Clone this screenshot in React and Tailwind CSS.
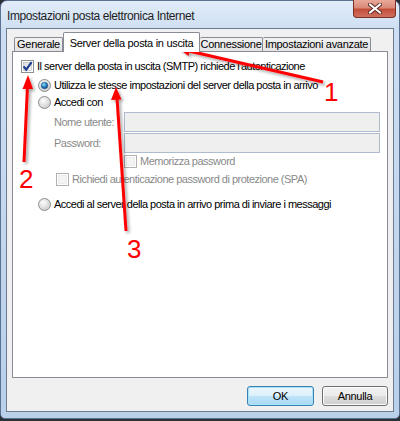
import React from 'react';

const font = "font-['Liberation_Sans',Arial,sans-serif]";

const CheckBox = ({ checked, disabled }) => (
  <svg width="13" height="13" viewBox="0 0 13 13" className="shrink-0">
    <defs>
      <linearGradient id={checked ? 'cbOn' : 'cbOff'} x1="0" y1="0" x2="1" y2="1">
        <stop offset="0" stopColor={disabled ? '#f4f4f4' : '#dcdcdc'} />
        <stop offset="1" stopColor={disabled ? '#f4f4f4' : '#fbfbfb'} />
      </linearGradient>
    </defs>
    <rect x="0.5" y="0.5" width="12" height="12" fill="#fff" stroke={disabled ? '#b1b1b1' : '#8e8f8f'} />
    <rect x="2.5" y="2.5" width="8" height="8" fill={`url(#${checked ? 'cbOn' : 'cbOff'})`} stroke={disabled ? '#e2e2e2' : '#b4b4b4'} strokeWidth="0.6" />
    {checked && <path d="M2.6 6.4 L5.2 9.6 L10.6 2.2" fill="none" stroke="#1d3e8f" strokeWidth="2.2" />}
  </svg>
);

const Radio = ({ checked }) => (
  <svg width="13" height="13" viewBox="0 0 13 13" className="shrink-0">
    <defs>
      <radialGradient id="rbg" cx="0.4" cy="0.35" r="0.7">
        <stop offset="0" stopColor="#fdfdfd" />
        <stop offset="1" stopColor="#c9c9c9" />
      </radialGradient>
      <radialGradient id="rdot" cx="0.4" cy="0.35" r="0.7">
        <stop offset="0" stopColor="#9fe0fb" />
        <stop offset="0.5" stopColor="#2587c4" />
        <stop offset="1" stopColor="#0f3d70" />
      </radialGradient>
    </defs>
    <circle cx="6.5" cy="6.5" r="6" fill="url(#rbg)" stroke="#8e8f8f" />
    {checked && <circle cx="6.5" cy="6.5" r="3.3" fill="url(#rdot)" stroke="#1a4f80" strokeWidth="0.5" />}
  </svg>
);

const Row = ({ className, children }) => (
  <div className={`flex items-center ${className}`}>{children}</div>
);

export default function App() {
  return (
    <div className={`relative w-[400px] h-[421px] overflow-hidden bg-[#2b2f36] text-[11px] tracking-[-0.3px] text-black ${font}`}>
      <div className="flex flex-col w-[400px] h-[419px] rounded-t-[7px] rounded-b-[5px] border border-[#5b7191] bg-[linear-gradient(180deg,#e1ecf8_0%,#cddef2_30px,#b9d0ea_100%)]">
        <div className="h-[27px] shrink-0 flex items-center pl-[6px] pt-[2px] text-[12px] tracking-[-0.4px] text-[#1e1e1e]">
          Impostazioni posta elettronica Internet
        </div>

        <div className="mx-[5px] mb-[6px] flex-1 flex flex-col border border-[#6c7b8f] bg-[#f0f0f0] px-[5px] pt-[4px] pb-[5px]">
          <div className="flex items-end h-[18px] pl-[2px]">
            <div className="h-[14px] w-[49px] flex items-center justify-center border border-b-0 border-[#898c95] rounded-t-[2px] bg-[linear-gradient(#f2f2f2,#e3e3e3)]">
              Generale
            </div>
            <div className="relative z-10 -mb-[1px] h-[20px] w-[137px] flex items-start pt-[2px] justify-center border border-b-0 border-[#898c95] rounded-t-[2px] bg-white">
              Server della posta in uscita
            </div>
            <div className="h-[14px] w-[63px] flex items-center justify-center border border-b-0 border-l-0 border-[#898c95] rounded-t-[2px] bg-[linear-gradient(#f2f2f2,#e3e3e3)]">
              Connessione
            </div>
            <div className="h-[14px] w-[108px] flex items-center justify-center border border-b-0 border-l-0 border-[#898c95] rounded-t-[2px] bg-[linear-gradient(#f2f2f2,#e3e3e3)]">
              Impostazioni avanzate
            </div>
          </div>

          <div className="flex-1 flex flex-col border border-[#898c95] bg-white pr-[7px] tracking-[-0.5px]">
            <Row className="mt-[6px] h-[16px] pl-[8px] gap-[3px]">
              <CheckBox checked />
              <span>Il server della posta in uscita (SMTP) richiede l'autenticazione</span>
            </Row>
            <Row className="mt-[3px] h-[17px] pl-[25px] gap-[3px]">
              <Radio checked />
              <span>Utilizza le stesse impostazioni del server della posta in arrivo</span>
            </Row>
            <Row className="h-[17px] pl-[25px] gap-[3px]">
              <Radio />
              <span>Accedi con</span>
            </Row>
            <Row className="mt-[1px] h-[20px] pl-[41px]">
              <span className="w-[70px] shrink-0 text-[#8a8a8a]">Nome utente:</span>
              <div className="flex-1 h-[20px] border border-[#aebccd] bg-[#efefef]" />
            </Row>
            <Row className="mt-[1px] h-[20px] pl-[41px]">
              <span className="w-[70px] shrink-0 text-[#8a8a8a]">Password:</span>
              <div className="flex-1 h-[20px] border border-[#aebccd] bg-[#efefef]" />
            </Row>
            <Row className="h-[16px] pl-[111px] gap-[3px] text-[#8a8a8a]">
              <CheckBox disabled />
              <span>Memorizza password</span>
            </Row>
            <Row className="mt-[2px] h-[16px] pl-[43px] gap-[3px] text-[#8a8a8a]">
              <CheckBox disabled />
              <span>Richiedi autenticazione password di protezione (SPA)</span>
            </Row>
            <Row className="mt-[9px] h-[16px] pl-[25px] gap-[3px]">
              <Radio />
              <span>Accedi al server della posta in arrivo prima di inviare i messaggi</span>
            </Row>
          </div>

          <div className="mt-[8px] h-[20px] flex justify-end gap-[8px]">
            <button className="w-[67px] h-[20px] rounded-[3px] border border-[#3c7fb1] bg-[linear-gradient(#ecf7fd_0%,#dcf0fb_50%,#bfe3f8_51%,#a9d9f5_100%)] shadow-[inset_0_0_0_1px_#a6e4fb]">
              OK
            </button>
            <button className="w-[66px] h-[20px] rounded-[3px] border border-[#707070] bg-[linear-gradient(#f2f2f2_0%,#ebebeb_50%,#dddddd_51%,#cfcfcf_100%)] shadow-[inset_0_0_0_1px_#fcfcfc]">
              Annulla
            </button>
          </div>
        </div>
      </div>

      <div className="absolute top-0 right-[4px] w-[43px] h-[18px] flex items-center justify-center rounded-b-[4px] border border-t-0 border-[#7a2f24] bg-[linear-gradient(#e9a99a_0%,#d98a79_45%,#c44d3a_55%,#d0705e_100%)]">
        <svg width="14" height="11" viewBox="0 0 14 11">
          <path d="M2 1.5 L12 9.5 M12 1.5 L2 9.5" stroke="#5a2a24" strokeWidth="4" strokeLinecap="square" />
          <path d="M2 1.5 L12 9.5 M12 1.5 L2 9.5" stroke="#ffffff" strokeWidth="2" strokeLinecap="square" />
        </svg>
      </div>

      <svg className="absolute inset-0 pointer-events-none" width="400" height="421" viewBox="0 0 400 421">
        <defs>
          <filter id="sh" x="-20%" y="-20%" width="140%" height="140%">
            <feDropShadow dx="2" dy="2" stdDeviation="1.5" floodColor="#000" floodOpacity="0.35" />
          </filter>
        </defs>
        <g fill="#ff0000" stroke="#ff0000" filter="url(#sh)">
          <line x1="323" y1="82" x2="189" y2="51" strokeWidth="3" />
          <polygon points="178,48 191,45.5 188.5,56" stroke="none" />
          <line x1="24" y1="162" x2="27.5" y2="86" strokeWidth="3" />
          <polygon points="28,75 22.5,89 33,89" stroke="none" />
          <line x1="126" y1="231" x2="117" y2="98" strokeWidth="3" />
          <polygon points="116,87 111,100 121.5,99.5" stroke="none" />
        </g>
        <g fill="#ff0000" fontFamily="'Liberation Sans', Arial, sans-serif" fontSize="26">
          <text x="324" y="101">1</text>
          <text x="19" y="188">2</text>
          <text x="127" y="258">3</text>
        </g>
      </svg>
    </div>
  );
}
